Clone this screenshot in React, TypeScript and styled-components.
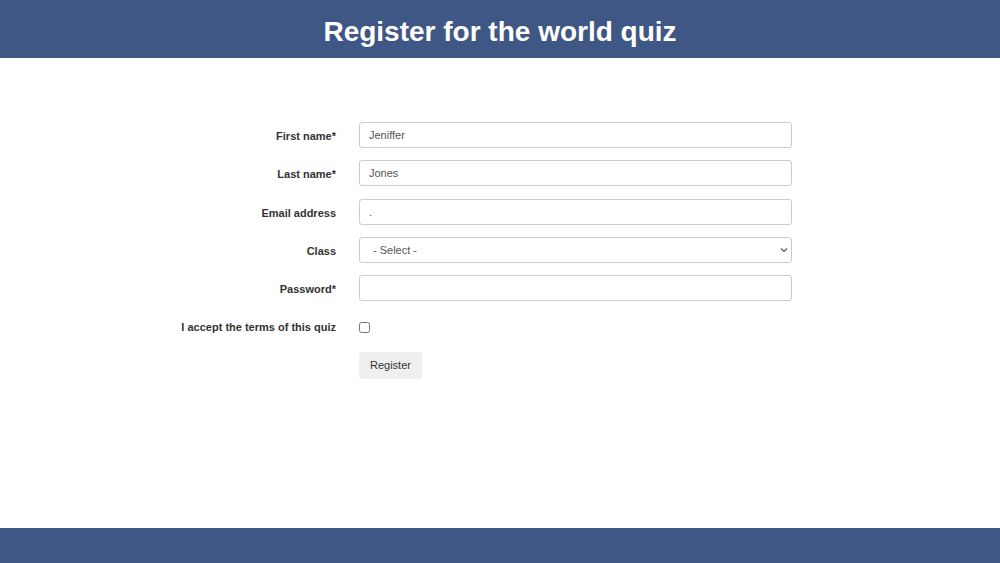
import React from "react";
import styled, { createGlobalStyle } from "styled-components";

const Global = createGlobalStyle`
  html, body { margin: 0; padding: 0; }
  body {
    font-family: "Liberation Sans", Arial, sans-serif;
    background: #ffffff;
    color: #333333;
  }
`;

const Page = styled.div`
  width: 1000px;
  height: 563px;
  display: flex;
  flex-direction: column;
`;

const Header = styled.header`
  height: 58px;
  box-sizing: border-box;
  padding-top: 5px;
  background: #3f5784;
  display: flex;
  align-items: center;
  justify-content: center;
`;

const Title = styled.h1`
  margin: 0;
  color: #ffffff;
  font-size: 28px;
  font-weight: 700;
  line-height: 1;
`;

const Main = styled.main`
  flex: 1;
  padding: 64px 0 0 170px;
`;

const Form = styled.form`
  display: grid;
  grid-template-columns: 166px 433px;
  grid-auto-rows: 26px;
  column-gap: 23px;
  row-gap: 12.3px;
  align-items: start;
`;

const Label = styled.label`
  display: block;
  height: 26px;
  text-align: right;
  font-size: 11px;
  font-weight: 700;
  color: #333333;
  line-height: 28px;
`;

const Field = styled.input`
  box-sizing: border-box;
  height: 26px;
  width: 100%;
  padding: 0 9px;
  border: 1px solid #cccccc;
  border-radius: 3px;
  font-family: "Liberation Sans", Arial, sans-serif;
  font-size: 11px;
  color: #555555;
  background: #ffffff;
  outline: none;
`;

const SelectWrap = styled.div`
  position: relative;
  height: 26px;
`;

const Select = styled.select`
  box-sizing: border-box;
  appearance: none;
  height: 26px;
  width: 100%;
  padding: 0 9px 0 13px;
  border: 1px solid #cccccc;
  border-radius: 3px;
  font-family: "Liberation Sans", Arial, sans-serif;
  font-size: 11px;
  color: #555555;
  background: #ffffff;
  outline: none;
`;

const Chevron = styled.svg`
  position: absolute;
  right: 4px;
  top: 10px;
  width: 8px;
  height: 6px;
  pointer-events: none;
`;

const CheckCell = styled.div`
  box-sizing: border-box;
  height: 26px;
  padding-top: 2px;
  display: flex;
  align-items: center;
`;

const Check = styled.input`
  margin: 0;
  width: 11px;
  height: 11px;
`;

const Spacer = styled.div``;

const Button = styled.button`
  justify-self: start;
  height: 27px;
  padding: 0 11px;
  border: none;
  border-radius: 3px;
  background: #efefef;
  color: #333333;
  font-family: "Liberation Sans", Arial, sans-serif;
  font-size: 11px;
`;

const Footer = styled.footer`
  height: 35px;
  background: #3f5784;
`;

export default function App() {
  return (
    <Page>
      <Global />
      <Header>
        <Title>Register for the world quiz</Title>
      </Header>
      <Main>
        <Form onSubmit={(e) => e.preventDefault()}>
          <Label htmlFor="fn">First name*</Label>
          <Field id="fn" defaultValue="Jeniffer" />
          <Label htmlFor="ln">Last name*</Label>
          <Field id="ln" defaultValue="Jones" />
          <Label htmlFor="em">Email address</Label>
          <Field id="em" defaultValue="." />
          <Label htmlFor="cl">Class</Label>
          <SelectWrap>
            <Select id="cl" defaultValue="">
              <option value="">- Select -</option>
            </Select>
            <Chevron viewBox="0 0 8 6">
              <path d="M1 1.5 L4 4.5 L7 1.5" fill="none" stroke="#555" strokeWidth="1.2" />
            </Chevron>
          </SelectWrap>
          <Label htmlFor="pw">Password*</Label>
          <Field id="pw" type="password" />
          <Label htmlFor="tc">I accept the terms of this quiz</Label>
          <CheckCell>
            <Check id="tc" type="checkbox" />
          </CheckCell>
          <Spacer />
          <Button type="submit">Register</Button>
        </Form>
      </Main>
      <Footer />
    </Page>
  );
}
